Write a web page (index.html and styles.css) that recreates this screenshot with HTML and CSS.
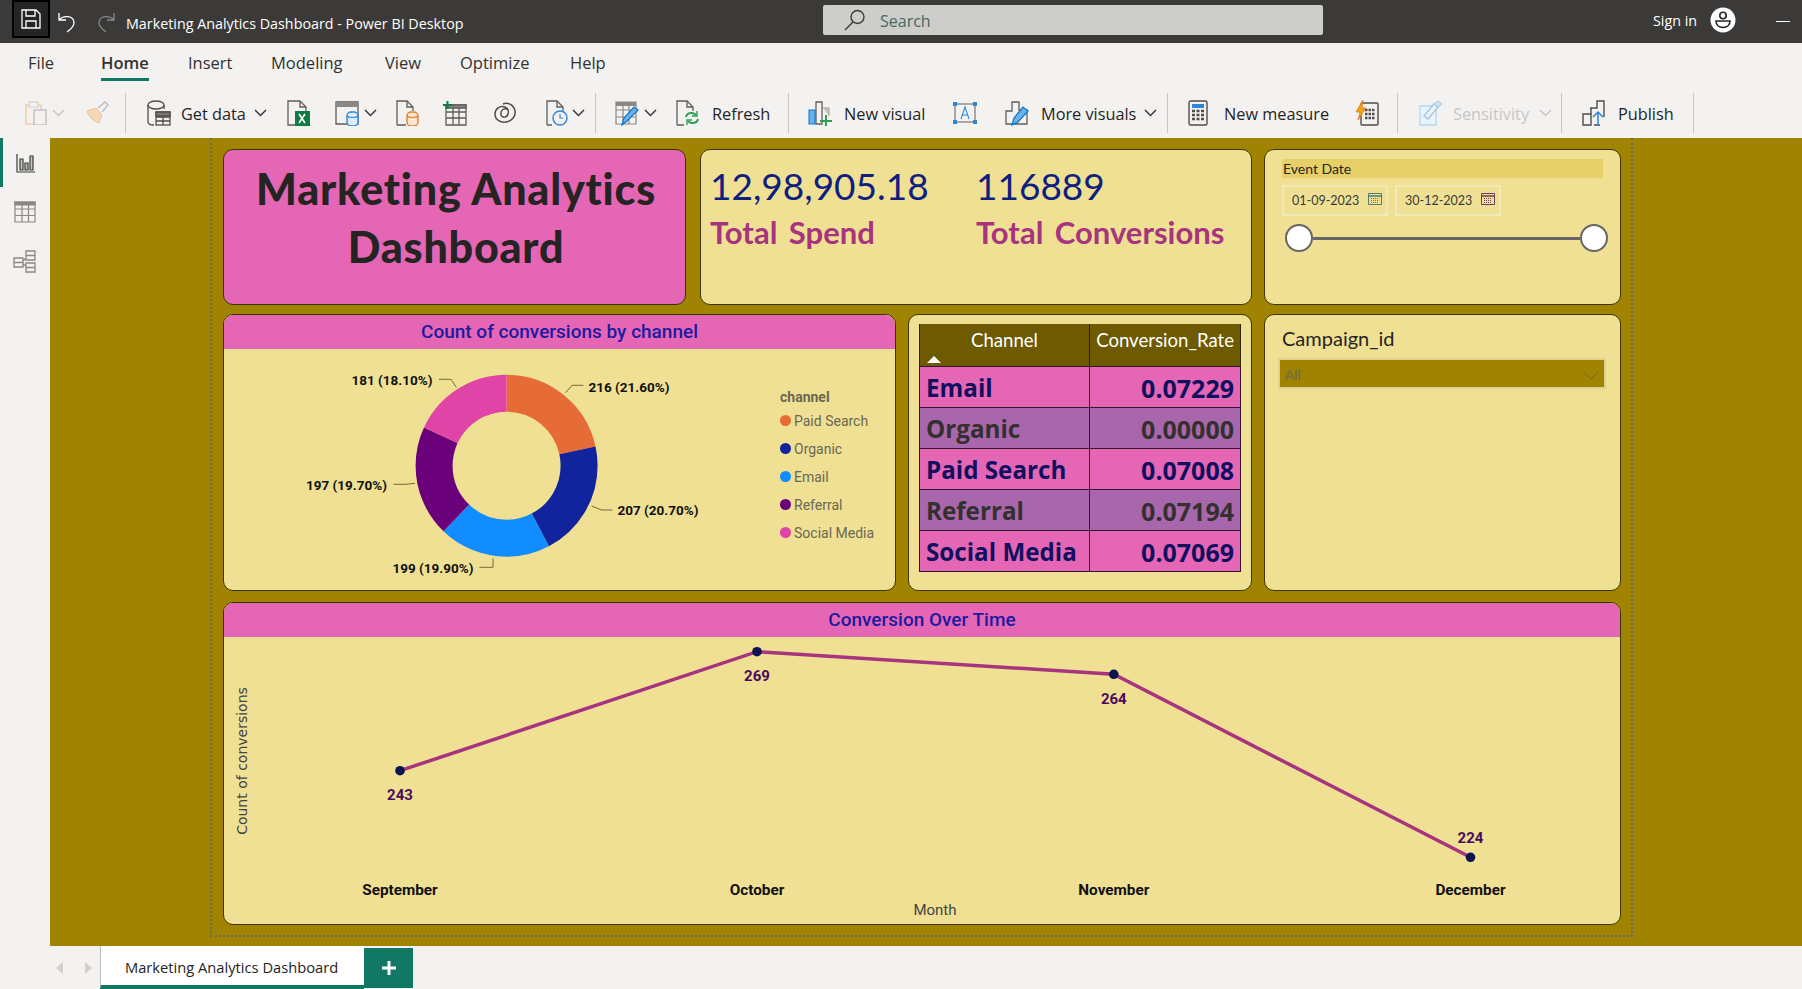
FILE: index.html
```html
<!DOCTYPE html>
<html lang="en">
<head>
	<meta charset="UTF-8">
	<title>Marketing Analytics Dashboard - Power BI Desktop</title>
	<link rel="stylesheet" href="styles.css">
</head>
<body>
	<div class="titlebar">
		<div class="save">
			<svg width="20" height="20" viewBox="0 0 20 20" fill="none" stroke="#fff" stroke-width="1.3"><path d="M1 1h14l4 4v14H1z"/><path d="M5 1v6h9V1M5 19v-7h10v7"/></svg>
		</div>
		<svg class="undo" width="20" height="22" viewBox="0 0 20 22" fill="none" stroke="#fff" stroke-width="1.3"><path d="M1 2v7h7M1 9c4-5 15-5 15 3 0 3-3 6-7 9"/></svg>
		<svg class="redo" width="20" height="22" viewBox="0 0 20 22" fill="none" stroke="#8a8886" stroke-width="1.3"><path d="M19 2v7h-7M19 9c-4-5-15-5-15 3 0 3 3 6 7 9"/></svg>
		<div class="doc-title">Marketing Analytics Dashboard - Power BI Desktop</div>
		<div class="search">
			<svg width="22" height="22" viewBox="0 0 22 22" fill="none" stroke="#3b3a39" stroke-width="1.4"><circle cx="13.5" cy="8" r="6.5"/><path d="M9 13l-8 8"/></svg>
			<span>Search</span>
		</div>
		<div class="signin">Sign in</div>
		<svg class="avatar" width="26" height="26" viewBox="0 0 26 26"><circle cx="13" cy="13" r="12.5" fill="#fff"/><circle cx="13" cy="8.5" r="3.2" fill="none" stroke="#252423" stroke-width="1.6"/><path d="M6 14h14c0 4-3 6.5-7 6.5S6 18 6 14z" fill="none" stroke="#252423" stroke-width="1.6"/></svg>
		<div class="minimize"></div>
	</div>

	<div class="tabs">
		<div>File</div>
		<div class="tab-active">Home</div>
		<div>Insert</div>
		<div>Modeling</div>
		<div>View</div>
		<div>Optimize</div>
		<div>Help</div>
	</div>

	<div class="ribbon">
		<svg width="24" height="24" viewBox="0 0 24 24" fill="none"><path d="M1 4h15v19H1z" stroke="#f2cfa9" stroke-width="1.5"/><rect x="4" y="1" width="9" height="5" fill="#f3f2f1" stroke="#cfcdcb"/><rect x="9" y="9" width="12" height="15" fill="#f3f2f1" stroke="#bdbbb9" stroke-width="1.3"/></svg>
		<svg class="chev chev-off" width="13" height="8" viewBox="0 0 13 8"><path d="M1 1l5.500 5.500L12 1"/></svg>
		<svg width="24" height="24" viewBox="0 0 24 24" fill="none"><path d="M2 10l9-3 6 7-3 8c-5-1-10-6-12-12z" fill="#f6d8b8" stroke="#e9c39a"/><path d="M13 7l7-6 3 3-6 7" fill="#f3f2f1" stroke="#bdbbb9" stroke-width="1.3"/></svg>
		<div class="sep"></div>
		<svg width="24" height="26" viewBox="0 0 24 26" fill="none" stroke="#504e4c" stroke-width="1.3"><path d="M1 5v17c0 2 3 3 6 3M17 5v4"/><ellipse cx="9" cy="5" rx="8" ry="4"/><rect x="9" y="12" width="14" height="13" fill="#f3f2f1"/><path d="M9 17h14M9 21h14M16 12v13"/><path d="M9 12h14v4H9z" fill="#7a7876"/></svg>
		<div class="rb-text">Get data</div>
		<svg class="chev" width="13" height="8" viewBox="0 0 13 8"><path d="M1 1l5.500 5.500L12 1"/></svg>
		<svg width="24" height="26" viewBox="0 0 24 26" fill="none"><path d="M1 1h12l6 6v18H1z" stroke="#605e5c" stroke-width="1.3"/><path d="M13 1v6h6" stroke="#605e5c" stroke-width="1.3"/><rect x="8" y="11" width="15" height="15" fill="#107c41"/><path d="M12 14l6 9M18 14l-6 9" stroke="#fff" stroke-width="1.6"/></svg>
		<svg width="24" height="26" viewBox="0 0 24 26" fill="none"><path d="M1 2h22v22H1z" stroke="#605e5c" stroke-width="1.3"/><path d="M1 2h22v5H1z" fill="#8a8886"/><rect x="12" y="12" width="11" height="14" rx="4" fill="#deecf9" stroke="#2b88d8" stroke-width="1.4"/><path d="M12 16c2 2 9 2 11 0" stroke="#2b88d8" stroke-width="1.2"/></svg>
		<svg class="chev" width="13" height="8" viewBox="0 0 13 8"><path d="M1 1l5.500 5.500L12 1"/></svg>
		<svg width="24" height="26" viewBox="0 0 24 26" fill="none"><path d="M1 25V1h10l6 6v4M1 25h9" stroke="#605e5c" stroke-width="1.3"/><path d="M11 1v6h6" stroke="#605e5c" stroke-width="1.3"/><rect x="11" y="12" width="11" height="14" rx="4" fill="#fbe5d0" stroke="#e3812b" stroke-width="1.4"/><path d="M11 16c2 2 9 2 11 0" stroke="#e3812b" stroke-width="1.2"/></svg>
		<svg width="24" height="26" viewBox="0 0 24 26" fill="none" stroke="#605e5c" stroke-width="1.3"><path d="M3 5h20v20H3zM3 12h20M3 18h20M10 5v20M16 5v20"/><path d="M3 5h20v3H3z" fill="#8a8886"/><path d="M0 5h9M4.500 1v8" stroke="#107c41" stroke-width="2"/></svg>
		<svg width="24" height="24" viewBox="0 0 24 24" fill="none" stroke="#504e4c" stroke-width="1.5"><path d="M15 9c-3-3-8 0-7 5 1 3 6 3 7-1 1-3 0-6-3-7C7 4 2 8 2 13c0 6 6 9 11 8 6-1 10-6 9-11-1-6-7-9-12-7"/></svg>
		<svg width="24" height="26" viewBox="0 0 24 26" fill="none"><path d="M2 25V1h10l6 6v5M2 25h5" stroke="#605e5c" stroke-width="1.3"/><path d="M12 1v6h6" stroke="#605e5c" stroke-width="1.3"/><circle cx="15" cy="18" r="7" fill="#f3f2f1" stroke="#2b88d8" stroke-width="1.4"/><path d="M15 14v4h3" stroke="#2b88d8" stroke-width="1.2"/></svg>
		<svg class="chev" width="13" height="8" viewBox="0 0 13 8"><path d="M1 1l5.500 5.500L12 1"/></svg>
		<div class="sep"></div>
		<svg width="25" height="26" viewBox="0 0 25 26" fill="none"><path d="M1 2h20v22H1zM1 10h20M1 17h20M8 5v19M14 5v19" stroke="#8a8886" stroke-width="1.2"/><path d="M1 2h20v4H1z" fill="#8a8886"/><path d="M7 25l2-7 10-11 4 3-11 11z" fill="#71afe5" stroke="#0078d4" stroke-width="1.2"/></svg>
		<svg class="chev" width="13" height="8" viewBox="0 0 13 8"><path d="M1 1l5.500 5.500L12 1"/></svg>
		<svg width="24" height="26" viewBox="0 0 24 26" fill="none"><path d="M1 25V1h10l6 6v4M1 25h7" stroke="#605e5c" stroke-width="1.3"/><path d="M11 1v6h6" stroke="#605e5c" stroke-width="1.3"/><path d="M10 17c1-5 8-5 10-2M22 19c-1 5-8 5-10 2" stroke="#2f9e52" stroke-width="2"/><path d="M21 11v5h-5M11 25v-5h5" stroke="#2f9e52" stroke-width="1.4"/></svg>
		<div class="rb-text">Refresh</div>
		<div class="sep"></div>
		<svg width="24" height="26" viewBox="0 0 24 26" fill="none"><rect x="1" y="10" width="6" height="14" fill="#71afe5" stroke="#0078d4"/><path d="M8 24V2h6v22z" fill="#f3f2f1" stroke="#605e5c" stroke-width="1.3"/><path d="M15 8h6v8" fill="#c8c6c4" stroke="#a19f9d"/><path d="M12 21h12M18 15v11" stroke="#2f9e52" stroke-width="2"/></svg>
		<div class="rb-text">New visual</div>
		<svg width="24" height="24" viewBox="0 0 24 24" fill="none"><path d="M2 3h20v18H2z" stroke="#605e5c"/><path d="M8 18l4-12 4 12M9.500 14h5" stroke="#2b88d8" stroke-width="1.1"/><rect x="0" y="1" width="4" height="4" fill="#2b88d8"/><rect x="20" y="1" width="4" height="4" fill="#2b88d8"/><rect x="0" y="19" width="4" height="4" fill="#2b88d8"/><rect x="20" y="19" width="4" height="4" fill="#2b88d8"/></svg>
		<svg width="24" height="26" viewBox="0 0 24 26" fill="none"><path d="M1 24V11h6V2h7v8h8v14z" stroke="#605e5c" stroke-width="1.3"/><path d="M7 25l2-7 9-11 5 4-10 11z" fill="#71afe5" stroke="#0078d4" stroke-width="1.2"/></svg>
		<div class="rb-text">More visuals</div>
		<svg class="chev" width="13" height="8" viewBox="0 0 13 8"><path d="M1 1l5.500 5.500L12 1"/></svg>
		<div class="sep"></div>
		<svg width="20" height="26" viewBox="0 0 20 26" fill="none"><rect x="1" y="1" width="18" height="24" rx="1.500" stroke="#504e4c" stroke-width="1.4"/><rect x="4" y="4" width="12" height="4" fill="#2b88d8"/><path d="M4 11h3M8.500 11h3M13 11h3M4 15h3M8.500 15h3M13 15h3M4 19h3M8.500 19h3M13 19h3" stroke="#504e4c" stroke-width="2.400"/></svg>
		<div class="rb-text">New measure</div>
		<svg width="24" height="26" viewBox="0 0 24 26" fill="none"><rect x="6" y="3" width="17" height="22" rx="1" stroke="#504e4c" stroke-width="1.4"/><path d="M10 10h10M10 14h10M10 18h10" stroke="#504e4c" stroke-width="2.400" stroke-dasharray="2.500 1"/><path d="M8 0L1 12h4l-2 8 8-12H7z" fill="#f7a31a" stroke="#d2701a" stroke-width=".7"/></svg>
		<div class="sep"></div>
		<svg width="24" height="26" viewBox="0 0 24 26" fill="none"><path d="M1 6h16v19H1zM1 6v19" fill="#eaf3fb" stroke="#b5d6ef" stroke-width="1.3"/><path d="M5 16L15 4l4 3L9 19z" fill="#f3f2f1" stroke="#9cc8ea" stroke-width="1.3"/><path d="M15 4l4-3 4 3-4 3z" fill="#cfe4f5" stroke="#9cc8ea"/></svg>
		<div class="rb-text rb-off">Sensitivity</div>
		<svg class="chev chev-off" width="13" height="8" viewBox="0 0 13 8"><path d="M1 1l5.500 5.500L12 1"/></svg>
		<div class="sep"></div>
		<svg width="24" height="26" viewBox="0 0 24 26" fill="none" stroke="#504e4c" stroke-width="1.4"><path d="M1 14h8v11H1zM8 8h7V1h7v16"/><path d="M9 8v6M12 25h6"/><path d="M16 26V12M11 17l5-5 5 5" stroke="#2b88d8" stroke-width="1.500"/></svg>
		<div class="rb-text">Publish</div>
		<div class="sep"></div>
	</div>

	<div class="main">
		<div class="sidebar">
			<div class="side-item side-active">
				<svg width="20" height="20" viewBox="0 0 20 20" fill="none" stroke="#3b3a39" stroke-width="1.2"><path d="M1 1v18h18" /><path d="M4 6h3v11H4zM9 10h3v7H9zM14 3h3v14h-3z" fill="#c8c6c4"/></svg>
			</div>
			<div class="side-item">
				<svg width="22" height="22" viewBox="0 0 22 22" fill="none" stroke="#8a8886" stroke-width="1.2"><path d="M1 1h20v20H1zM1 8h20M1 14.500h20M8 4v17M14.500 4v17"/><path d="M1 1h20v3H1z" fill="#8a8886"/></svg>
			</div>
			<div class="side-item">
				<svg width="24" height="24" viewBox="0 0 24 24" fill="none" stroke="#8a8886" stroke-width="1.3"><path d="M1 9h9v9H1zM1 13.500h9M13 2h9v9h-9zM13 6.500h9M13 14h9v9h-9zM13 18.500h9M10 12l3-3M10 15l3 2"/></svg>
			</div>
		</div>

		<div class="canvas">
			<div class="page">
				<div class="row row-top">
					<div class="card card-title">Marketing Analytics<br>Dashboard</div>
					<div class="card card-kpi">
						<div class="kpi">
							<div class="kpi-value">12,98,905.18</div>
							<div class="kpi-label">Total Spend</div>
						</div>
						<div class="kpi">
							<div class="kpi-value">116889</div>
							<div class="kpi-label">Total Conversions</div>
						</div>
					</div>
					<div class="card card-date">
						<div class="date-head">Event Date</div>
						<div class="date-inputs">
							<div class="date-box">01-09-2023
								<svg width="14" height="13" viewBox="0 0 14 13" fill="none" stroke="#4e7d78"><path d="M.5 1.500h13v11H.5z"/><path d="M.5 4h13" stroke-width="1.500"/><path d="M3 6.500h8M3 8.500h8M3 10.500h8" stroke-dasharray="1 1"/></svg>
							</div>
							<div class="date-box">30-12-2023
								<svg width="14" height="13" viewBox="0 0 14 13" fill="none" stroke="#6b3a66"><path d="M.5 1.500h13v11H.5z"/><path d="M.5 4h13" stroke-width="1.500"/><path d="M3 6.500h8M3 8.500h8M3 10.500h8" stroke-dasharray="1 1"/></svg>
							</div>
						</div>
						<div class="slider">
							<div class="handle"></div>
							<div class="track"></div>
							<div class="handle"></div>
						</div>
					</div>
				</div>

				<div class="row row-mid">
					<div class="card card-donut">
						<div class="card-head">Count of conversions by channel</div>
						<div class="donut-body">
							<svg class="chart" width="552" height="242" viewBox="224 349 552 242">
								<g fill="none" stroke-width="37" transform="rotate(-90 506.600 465.700)">
									<circle cx="506.600" cy="465.700" r="72.500" pathLength="100" stroke="#e66c37" stroke-dasharray="21.600 78.400"/>
									<circle cx="506.600" cy="465.700" r="72.500" pathLength="100" stroke="#12239e" stroke-dasharray="20.700 79.300" stroke-dashoffset="-21.600"/>
									<circle cx="506.600" cy="465.700" r="72.500" pathLength="100" stroke="#118dff" stroke-dasharray="19.900 80.100" stroke-dashoffset="-42.300"/>
									<circle cx="506.600" cy="465.700" r="72.500" pathLength="100" stroke="#6b007b" stroke-dasharray="19.700 80.300" stroke-dashoffset="-62.200"/>
									<circle cx="506.600" cy="465.700" r="72.500" pathLength="100" stroke="#e044a7" stroke-dasharray="18.100 81.900" stroke-dashoffset="-81.900"/>
								</g>
								<g fill="none" stroke="#75693a">
									<path d="M565.600 392.700l6.400-7.400h11.400"/>
									<path d="M591.600 506l10 4h10.800"/>
									<path d="M493 558.300v9h-13.700"/>
									<path d="M415 483.300l-9.400 1h-12.100"/>
									<path d="M456.300 387.300l-5.300-8h-12"/>
								</g>
								<g class="slice-label">
									<text x="588.500" y="392">216 (21.60%)</text>
									<text x="617.500" y="515">207 (20.70%)</text>
									<text x="392.500" y="573">199 (19.90%)</text>
									<text x="306" y="490">197 (19.70%)</text>
									<text x="351.500" y="385">181 (18.10%)</text>
								</g>
							</svg>
							<div class="legend">
								<div class="legend-title">channel</div>
								<div class="legend-item"><i class="dot dot-paid"></i>Paid Search</div>
								<div class="legend-item"><i class="dot dot-organic"></i>Organic</div>
								<div class="legend-item"><i class="dot dot-email"></i>Email</div>
								<div class="legend-item"><i class="dot dot-referral"></i>Referral</div>
								<div class="legend-item"><i class="dot dot-social"></i>Social Media</div>
							</div>
						</div>
					</div>

					<div class="card card-table">
						<table class="rates">
							<thead>
								<tr><th class="th-channel">Channel<span class="sort"></span></th><th class="th-rate">Conversion_Rate</th></tr>
							</thead>
							<tbody>
								<tr><td>Email</td><td class="num">0.07229</td></tr>
								<tr class="alt"><td>Organic</td><td class="num">0.00000</td></tr>
								<tr><td>Paid Search</td><td class="num">0.07008</td></tr>
								<tr class="alt"><td>Referral</td><td class="num">0.07194</td></tr>
								<tr><td>Social Media</td><td class="num">0.07069</td></tr>
							</tbody>
						</table>
					</div>

					<div class="card card-campaign">
						<div class="campaign-title">Campaign_id</div>
						<div class="dropdown">
							<span>All</span>
							<svg width="16" height="9" viewBox="0 0 16 9" fill="none" stroke="#7d6a12"><path d="M1 1l7 7 7-7"/></svg>
						</div>
					</div>
				</div>

				<div class="row row-bottom">
					<div class="card card-line">
						<div class="card-head">Conversion Over Time</div>
						<svg class="chart" width="1397" height="289" viewBox="224 636 1397 289">
							<polyline points="400,769.700 757,650.700 1113.800,673.300 1470.500,856.300" fill="none" stroke="#a8337f" stroke-width="3.500"/>
							<g fill="#0c1450">
								<circle cx="400" cy="769.700" r="4.800"/>
								<circle cx="757" cy="650.700" r="4.800"/>
								<circle cx="1113.800" cy="673.300" r="4.800"/>
								<circle cx="1470.500" cy="856.300" r="4.800"/>
							</g>
							<g class="point-label">
								<text x="400" y="799">243</text>
								<text x="757" y="680">269</text>
								<text x="1113.800" y="703">264</text>
								<text x="1470.500" y="842">224</text>
							</g>
							<g class="month-label">
								<text x="400" y="894">September</text>
								<text x="757" y="894">October</text>
								<text x="1113.800" y="894">November</text>
								<text x="1470.500" y="894">December</text>
							</g>
							<text class="axis-x" x="935" y="914">Month</text>
							<text class="axis-y" transform="translate(247 760) rotate(-90)">Count of conversions</text>
						</svg>
					</div>
				</div>
			</div>
		</div>
	</div>

	<div class="pagebar">
		<svg class="pg-arrow" width="8" height="12" viewBox="0 0 8 12"><path d="M7 0v12L0 6z"/></svg>
		<svg class="pg-arrow" width="8" height="12" viewBox="0 0 8 12"><path d="M1 0v12l7-6z"/></svg>
		<div class="pg-tab">Marketing Analytics Dashboard</div>
		<div class="pg-add">
			<svg width="14" height="14" viewBox="0 0 14 14"><path d="M5.500 0h3v5.500H14v3H8.500V14h-3V8.500H0v-3h5.500z" fill="#fff"/></svg>
		</div>
	</div>
</body>
</html>
```

FILE: styles.css
```css
*{
	margin:0;
	padding:0;
	box-sizing:border-box;
}
html,body{
	width:100%;
	height:100%;
}
body{
	width:1802px;
	height:989px;
	overflow:hidden;
	background:#f3f2f1;
	font-family:"Open Sans",sans-serif;
	color:#252423;
}

/* title bar */
.titlebar{
	height:43px;
	background:#3b3a39;
	display:flex;
	align-items:center;
	color:#fff;
}
.save{
	width:38px;
	height:38px;
	margin:0 0 5px 12px;
	background:#252423;
	border:2px solid #000;
	display:flex;
	align-items:center;
	justify-content:center;
}
.undo{
	margin-left:8px;
}
.redo{
	margin-left:17px;
}
.doc-title{
	margin-left:11px;
	width:697px;
	font-size:14.300px;
	padding-top:3px;
}
.search{
	width:500px;
	height:30px;
	margin-bottom:3px;
	background:#cdcdcb;
	border-radius:2px;
	display:flex;
	align-items:center;
	padding-left:21px;
	gap:14px;
	color:#47695f;
	font-size:16px;
}
.search span{
	padding-top:2px;
}
.signin{
	margin-left:330px;
	font-size:14.300px;
	padding-bottom:2px;
}
.avatar{
	margin:0 0 4px 13px;
}
.minimize{
	width:14px;
	height:1px;
	background:#fff;
	margin-left:40px;
}

/* ribbon tabs */
.tabs{
	height:45px;
	padding:9px 0 0 28px;
	display:grid;
	grid-template-columns:73px 87px 83px 114px 75px 110px auto;
	align-items:start;
	font-size:16.500px;
	line-height:22px;
	color:#323130;
}
.tab-active{
	font-weight:600;
	justify-self:start;
	position:relative;
	width:48px;
}
.tab-active::after{
	content:"";
	position:absolute;
	left:0;
	right:0;
	bottom:-7px;
	height:3px;
	background:#117865;
}

/* ribbon */
.ribbon{
	height:50px;
	padding-left:25px;
	display:grid;
	grid-template-columns:27px 33px 40px 22px 34px 73px 33px 48px 29px 32px 47px 50px 52px 27px 23px 20px 29px 32px 36px 76px 20px 36px 109px 52px 36px 103px 23px 21px 36px 131px 42px 22px 34px 86px 22px 21px 36px 75px 1px;
	align-items:center;
	font-size:16.300px;
}
.sep{
	width:1px;
	height:40px;
	background:#c8c6c4;
}
.rb-text{
	white-space:nowrap;
	padding-top:2px;
}
.rb-off{
	color:#c8c6c4;
}
.chev{
	fill:none;
	stroke:#3b3a39;
	stroke-width:1.500;
}
.chev-off{
	stroke:#c8c6c4;
}

/* main area */
.main{
	height:808px;
	display:flex;
}
.sidebar{
	width:50px;
	background:#f3f2f1;
}
.side-item{
	height:49px;
	display:flex;
	align-items:center;
	justify-content:center;
}
.side-active{
	border-left:3px solid #117865;
	padding-right:1px;
}
.canvas{
	flex:1;
	background:#a08300;
	padding-left:160px;
}
.page{
	width:1423px;
	height:799px;
	border:2px dotted #6d6a5c;
	border-top:0;
	padding:11px 0 0 11px;
	display:flex;
	flex-direction:column;
}
.row{
	display:flex;
}
.row-top{
	height:156px;
	margin-bottom:9px;
}
.row-mid{
	height:277px;
	margin-bottom:11px;
}
.row-bottom{
	height:323px;
}
.card{
	background:#efe094;
	border:1px solid #3d3500;
	border-radius:10px;
	overflow:hidden;
	flex:none;
}
.card-head{
	height:34px;
	background:#e666b6;
	color:#1b1b9e;
	font-family:Roboto,sans-serif;
	font-weight:500;
	font-size:19px;
	text-align:center;
	line-height:34px;
}

/* top row */
.card-title{
	width:463px;
	margin-right:14px;
	background:#e666b6;
	font-family:Lato,sans-serif;
	font-weight:900;
	font-size:43px;
	line-height:58px;
	color:#252423;
	text-align:center;
	padding:10px 0 0 3px;
	letter-spacing:.8px;
}
.card-kpi{
	width:552px;
	margin-right:12px;
	display:flex;
	padding:11px 0 0 9px;
	font-family:Lato,sans-serif;
}
.kpi{
	width:266px;
}
.kpi-value{
	font-size:37px;
	line-height:50px;
	color:#0f1f80;
}
.kpi-label{
	font-size:31px;
	line-height:42px;
	font-weight:700;
	word-spacing:4px;
	color:#a8337f;
}
.card-date{
	width:357px;
	padding:9px 17px 0;
	font-family:Lato,sans-serif;
}
.date-head{
	height:19px;
	width:321px;
	background:#e6d067;
	font-size:14px;
	line-height:20px;
	color:#252423;
	padding-left:1px;
}
.date-inputs{
	display:flex;
	gap:7px;
	margin-top:7px;
}
.date-box{
	width:106px;
	height:31px;
	border:2px solid #f1e9b8;
	display:flex;
	align-items:center;
	justify-content:space-between;
	padding:0 4px 0 8px;
	font-size:12.500px;
	color:#3b3a39;
}
.date-box svg{
	margin-bottom:4px;
}
.slider{
	width:323px;
	margin:8px 0 0 3px;
	display:flex;
	align-items:center;
}
.handle{
	width:28px;
	height:28px;
	border-radius:50%;
	background:#fff;
	border:2px solid #666;
	flex:none;
}
.track{
	flex:1;
	height:3px;
	background:#666;
}

/* donut */
.card-donut{
	width:673px;
	margin-right:12px;
}
.donut-body{
	display:flex;
}
.chart{
	display:block;
	flex:none;
}
.slice-label{
	font-family:Roboto,sans-serif;
	font-weight:700;
	font-size:13.500px;
	fill:#111;
}
.legend{
	padding:38px 0 0 4px;
	font-family:Roboto,sans-serif;
	font-size:14px;
	color:#6b6752;
}
.legend-title{
	font-weight:700;
	line-height:20px;
}
.legend-item{
	height:28px;
	display:flex;
	align-items:center;
	gap:3px;
}
.dot{
	width:11px;
	height:11px;
	border-radius:50%;
	margin-bottom:2px;
}
.dot-paid{
	background:#e66c37;
}
.dot-organic{
	background:#12239e;
}
.dot-email{
	background:#118dff;
}
.dot-referral{
	background:#6b007b;
}
.dot-social{
	background:#e044a7;
}

/* table */
.card-table{
	width:344px;
	margin-right:12px;
	padding:9px 10px 0 10px;
}
.rates{
	width:322px;
	border-collapse:collapse;
	table-layout:fixed;
}
.rates th{
	height:42px;
	background:#6e5a00;
	color:#fff;
	font-family:Lato,sans-serif;
	font-weight:400;
	font-size:18.600px;
	vertical-align:top;
	padding-top:5px;
	border-left:1px solid #2b2400;
	border-right:1px solid #2b2400;
	white-space:nowrap;
}
.th-channel{
	width:170px;
	position:relative;
}
.th-rate{
	text-align:right;
	padding-right:6px;
}
.sort{
	position:absolute;
	left:7px;
	bottom:3px;
	border-left:7px solid transparent;
	border-right:7px solid transparent;
	border-bottom:7px solid #fff;
}
.rates td{
	height:41px;
	background:#e666b6;
	color:#10105e;
	font-weight:700;
	font-size:24.200px;
	line-height:30px;
	padding:2px 6px 0;
	border:1px solid #33152f;
	white-space:nowrap;
}
.rates .alt td{
	background:#a866ad;
	color:#33302e;
}
.rates .num{
	text-align:right;
	font-size:25px;
}

/* campaign slicer */
.card-campaign{
	width:357px;
	padding:9px 14px 0 13px;
}
.campaign-title{
	font-family:Lato,sans-serif;
	font-size:20px;
	line-height:28px;
	padding-left:4px;
	color:#252423;
}
.dropdown{
	height:31px;
	margin-top:6px;
	background:#a08300;
	border:2px solid #dfd28d;
	display:flex;
	align-items:center;
	justify-content:space-between;
	padding:3px 5px 0;
	font-family:"Liberation Sans",sans-serif;
	font-size:14px;
	color:#6e6a4a;
}

/* line chart */
.card-line{
	width:1398px;
}
.point-label{
	font-family:Roboto,sans-serif;
	font-weight:700;
	font-size:15px;
	fill:#4b0a5e;
	text-anchor:middle;
}
.month-label{
	font-family:Roboto,sans-serif;
	font-weight:700;
	font-size:15.300px;
	fill:#111;
	text-anchor:middle;
}
.axis-x{
	font-family:Roboto,sans-serif;
	font-size:15px;
	fill:#444;
	text-anchor:middle;
}
.axis-y{
	font-family:"DejaVu Sans",sans-serif;
	font-size:14px;
	fill:#444;
	text-anchor:middle;
}

/* page tabs */
.pagebar{
	height:43px;
	display:flex;
	align-items:center;
}
.pg-arrow{
	fill:#d2d0ce;
	margin-left:56px;
}
.pg-arrow + .pg-arrow{
	margin-left:20px;
}
.pg-tab{
	width:264px;
	height:43px;
	margin-left:8px;
	background:#fff;
	border-left:1px solid #bdbbb9;
	border-bottom:4px solid #117865;
	padding-left:24px;
	font-size:14.700px;
	line-height:43px;
}
.pg-add{
	width:49px;
	height:40px;
	background:#117865;
	display:flex;
	align-items:center;
	justify-content:center;
}
```
